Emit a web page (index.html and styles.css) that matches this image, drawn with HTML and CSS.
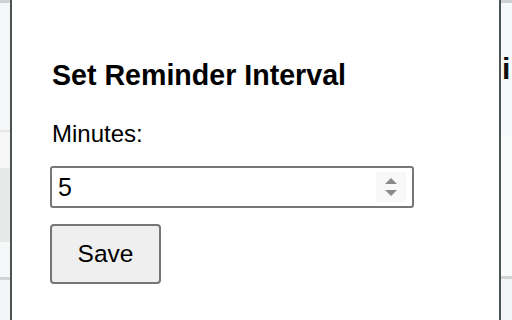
FILE: index.html
```html
<!DOCTYPE html>
<html>
<head>
<meta charset="utf-8">
<link rel="stylesheet" href="styles.css">
</head>
<body>
<div class="page">
  <div class="side side-left">
    <div class="band band-top"></div>
    <div class="band band-a"></div>
    <div class="band band-rule"></div>
    <div class="band band-b"></div>
    <div class="band band-c"></div>
    <div class="band band-d"></div>
    <div class="band band-rule2"></div>
    <div class="band band-e"></div>
  </div>
  <div class="popup">
    <h3 class="title">Set Reminder Interval</h3>
    <label class="label" for="minutes">Minutes:</label>
    <div class="field">
      <input id="minutes" class="field-input" type="text" value="5">
      <div class="spinner">
        <svg width="16" height="24" viewBox="0 0 16 24">
          <polygon points="8,3 14,9 2,9" fill="#8a8a8a"/>
          <polygon points="2,15 14,15 8,21" fill="#8a8a8a"/>
        </svg>
      </div>
    </div>
    <button class="save">Save</button>
  </div>
  <div class="side side-right">
    <div class="band band-top"></div>
    <div class="rband-a"><span class="cut">i</span></div>
    <div class="rband-b"></div>
    <div class="band band-rule2"></div>
    <div class="rband-c"></div>
  </div>
</div>
</body>
</html>
```
FILE: styles.css
```css
html, body {
  margin: 0;
  padding: 0;
  width: 512px;
  height: 320px;
  overflow: hidden;
  font-family: "Liberation Sans", Arial, sans-serif;
  color: #000;
}
.page {
  display: flex;
  width: 512px;
  height: 320px;
}
.side {
  display: flex;
  flex-direction: column;
  overflow: hidden;
  background: #f4f5f6;
}
.side-left {
  width: 10px;
}
.side-right {
  flex: 1;
  background: #f7f8f9;
}
.band-top { height: 3px; background: #cfd1d2; }
.band-a { height: 127px; background: #f5f6f8; }
.band-rule { height: 2px; background: #e4e5e6; }
.band-b { height: 36px; background: #f6f6f7; }
.band-c { height: 74px; background: #e7e8e8; }
.band-d { height: 35px; background: #f6f7f8; }
.band-rule2 { height: 3px; background: #d2d3d4; }
.band-e { flex: 1; background: #f4f5f6; }
.rband-a {
  height: 132px;
  background: #f6f8fa;
  position: relative;
}
.rband-b { height: 141px; background: #fafbfb; }
.rband-c { flex: 1; background: #f4f5f6; }
.cut {
  position: absolute;
  left: 1px;
  top: 48px;
  font-size: 30px;
  font-weight: bold;
  line-height: 36px;
  color: #111;
}
.popup {
  width: 447px;
  border-left: 2px solid #4b5355;
  border-right: 2px solid #4b5355;
  background: #fff;
  padding: 59px 0 0 40px;
  box-sizing: content-box;
  display: flex;
  flex-direction: column;
  align-items: flex-start;
}
.title {
  margin: 0;
  font-size: 28.6px;
  line-height: 32px;
  font-weight: bold;
}
.label {
  margin-top: 29px;
  font-size: 24px;
  line-height: 27px;
}
.field {
  margin-top: 19px;
  margin-left: -2px;
  width: 364px;
  height: 42px;
  box-sizing: border-box;
  border: 2px solid #767676;
  border-radius: 3px;
  display: flex;
  align-items: center;
  background: #fff;
}
.field-input {
  flex: 1;
  min-width: 0;
  border: none;
  outline: none;
  padding: 0 0 0 6px;
  margin: 0;
  font-family: "Liberation Sans", Arial, sans-serif;
  font-size: 25px;
  color: #000;
  background: transparent;
}
.spinner {
  width: 30px;
  height: 30px;
  margin-right: 6px;
  background: #f8f8f8;
  display: flex;
  align-items: center;
  justify-content: center;
}
.spinner svg { display: block; }
.save {
  margin-top: 16px;
  margin-left: -2px;
  width: 111px;
  height: 60px;
  box-sizing: border-box;
  border: 2px solid #767676;
  border-radius: 4px;
  background: #efefef;
  font-family: "Liberation Sans", Arial, sans-serif;
  font-size: 24.5px;
  color: #000;
  padding: 0;
}
```
